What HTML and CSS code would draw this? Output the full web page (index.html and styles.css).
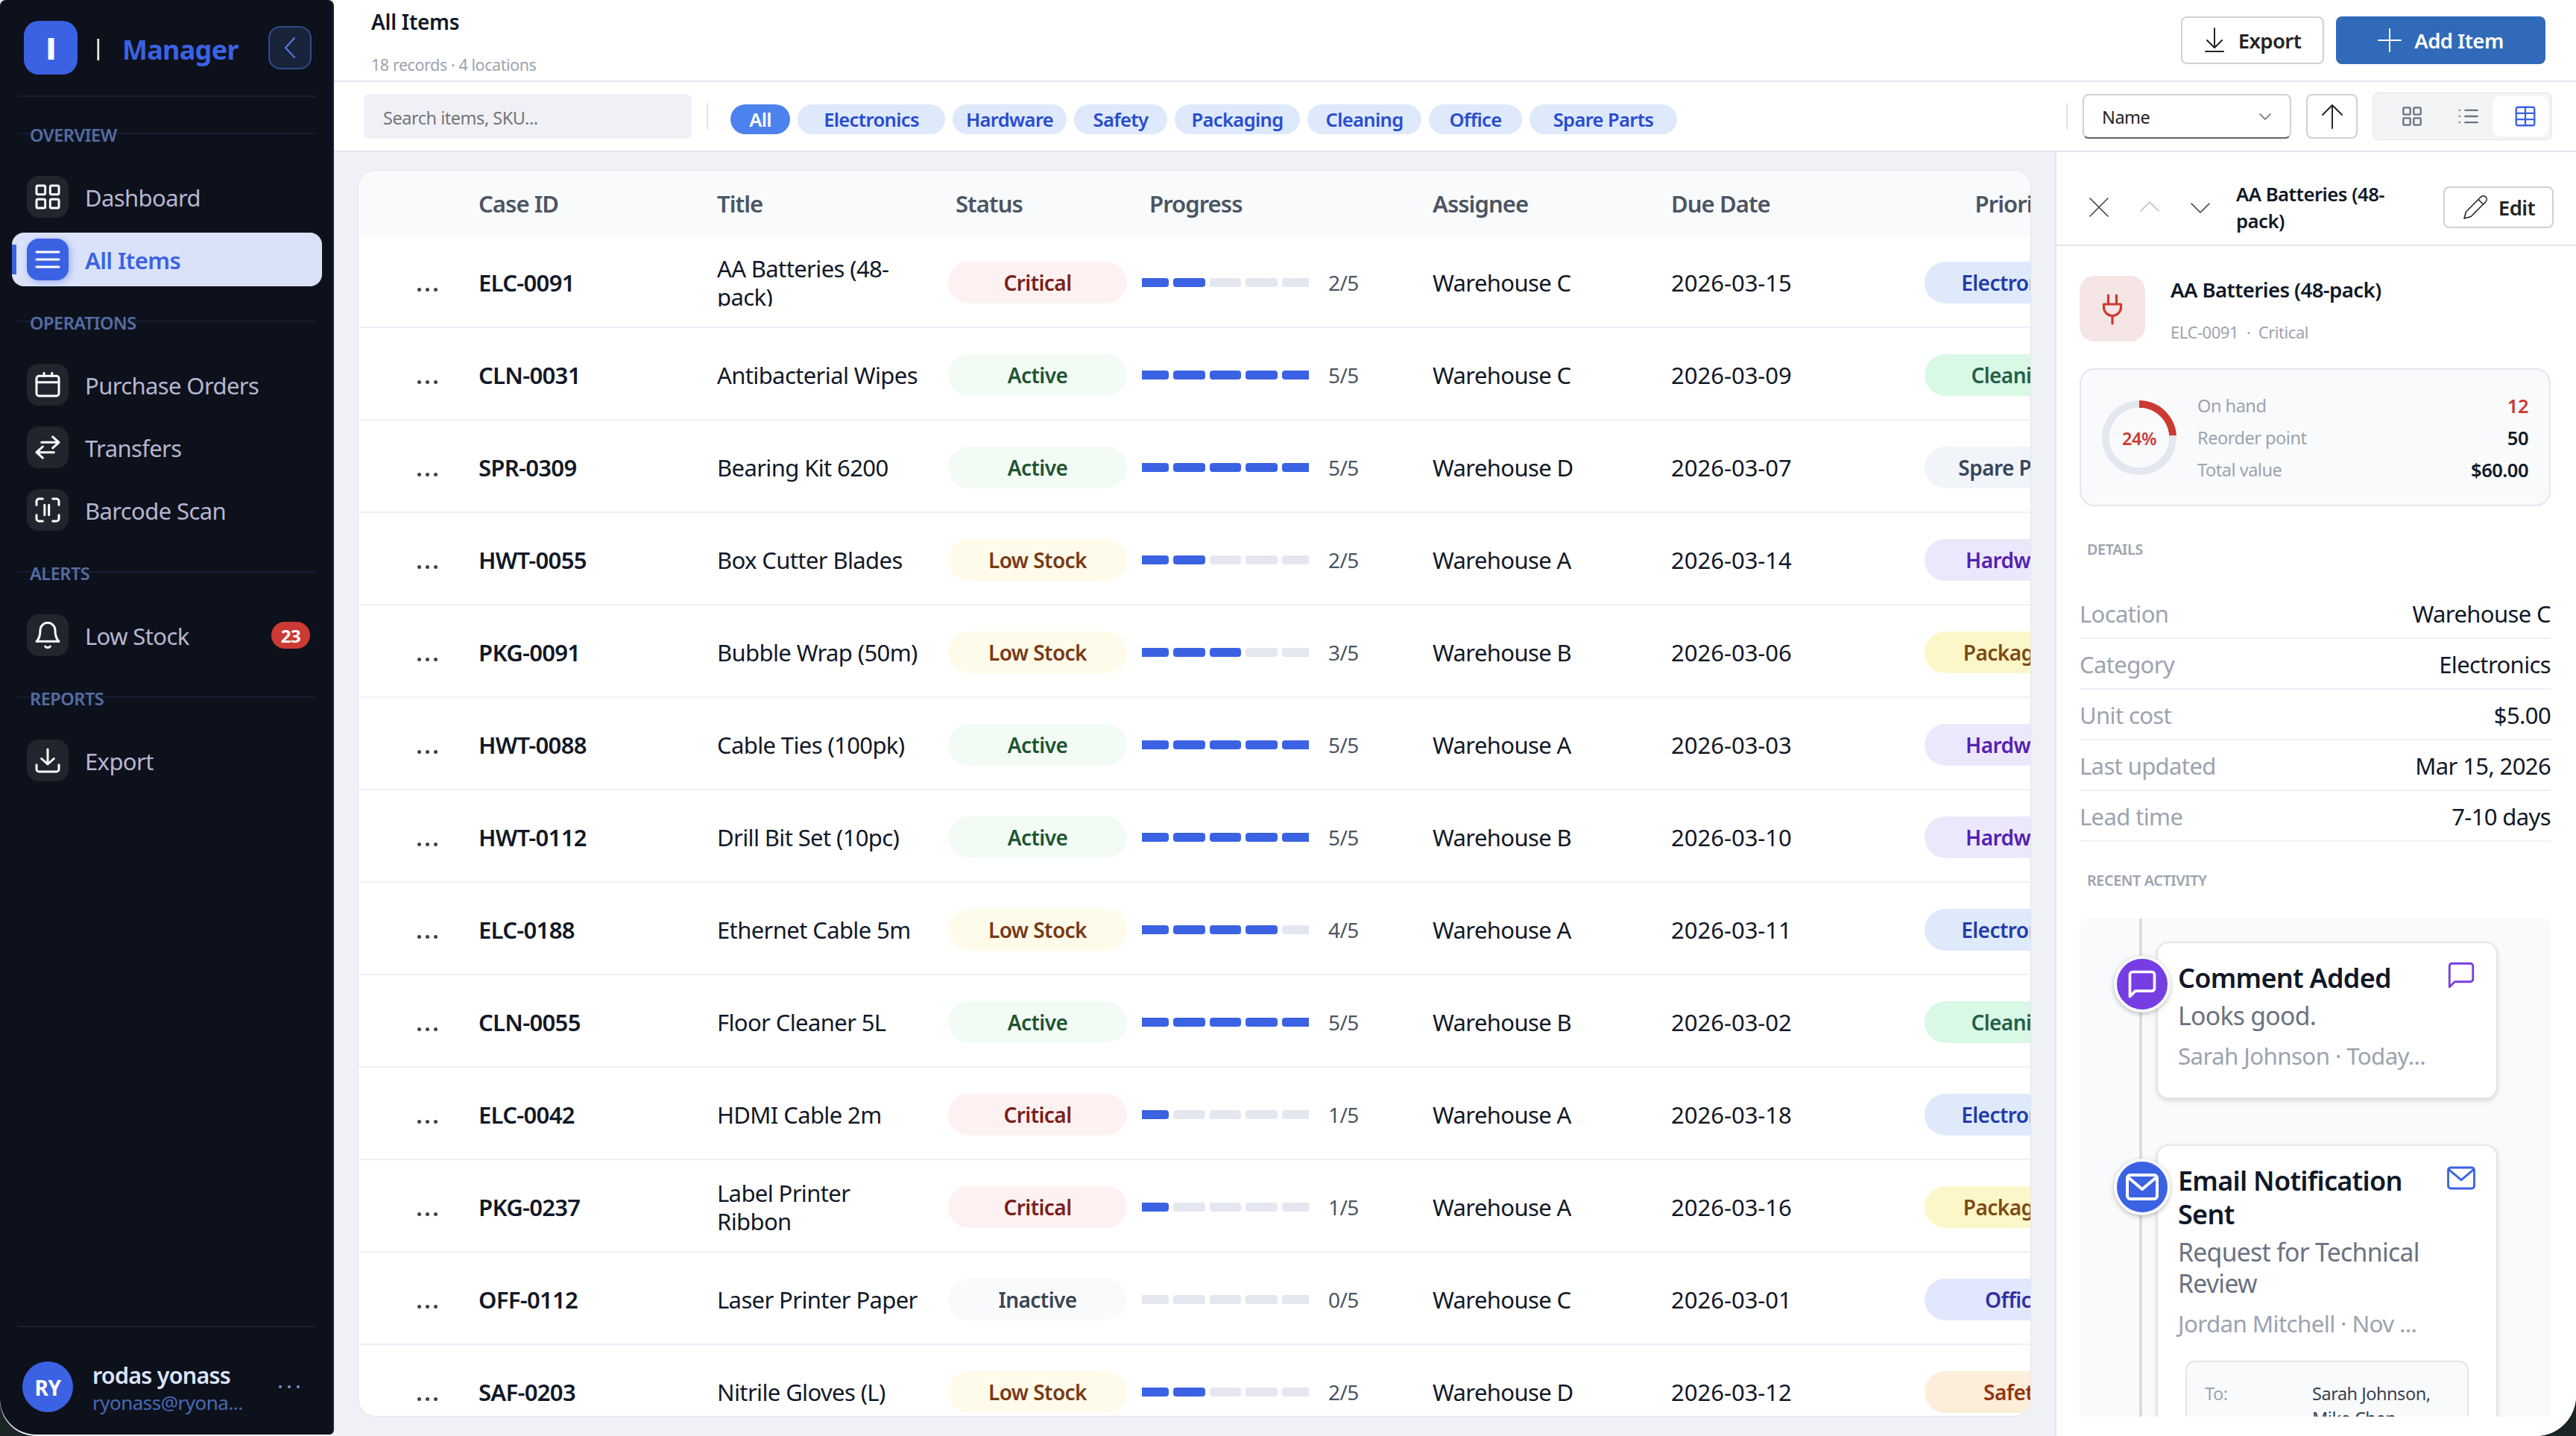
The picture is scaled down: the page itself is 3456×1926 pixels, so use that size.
FILE: index.html
```html
<!DOCTYPE html>
<html lang="en">
<head>
    <meta charset="UTF-8">
    <meta name="viewport" content="width=device-width, initial-scale=1.0">
    <title>All Items - Manager</title>
    <link rel="stylesheet" href="styles.css">
</head>
<body>
    <div class="app">
        <!-- Sidebar -->
        <aside class="sidebar">
            <div class="brand">
                <div class="brand-logo">I</div>
                <span class="brand-bar">|</span>
                <span class="brand-name">Manager</span>
                <button class="collapse-btn" aria-label="Collapse sidebar">
                    <svg width="18" height="34" viewBox="0 0 18 34"><path d="M15 4 3 17l12 13"/></svg>
                </button>
            </div>

            <nav class="nav">
                <div class="nav-section"><span>OVERVIEW</span></div>
                <a class="nav-item">
                    <span class="nav-icon"><svg viewBox="0 0 24 24"><rect x="3" y="3" width="7" height="7" rx="1"/><rect x="14" y="3" width="7" height="7" rx="1"/><rect x="3" y="14" width="7" height="7" rx="1"/><rect x="14" y="14" width="7" height="7" rx="1"/></svg></span>
                    <span class="nav-label">Dashboard</span>
                </a>
                <a class="nav-item active">
                    <span class="nav-icon"><svg viewBox="0 0 24 24"><path d="M3 6h18M3 12h18M3 18h18"/></svg></span>
                    <span class="nav-label">All Items</span>
                </a>
                <div class="nav-section"><span>OPERATIONS</span></div>
                <a class="nav-item">
                    <span class="nav-icon"><svg viewBox="0 0 24 24"><rect x="3" y="5" width="18" height="16" rx="2"/><path d="M3 10h18M9 2.5V5M15.500 2.500V5"/></svg></span>
                    <span class="nav-label">Purchase Orders</span>
                </a>
                <a class="nav-item">
                    <span class="nav-icon"><svg viewBox="0 0 24 24"><path d="M7 8h14M16 3.500l5 4.500-5 4.500M17 16H3M8 11.500 3 16l5 4.500"/></svg></span>
                    <span class="nav-label">Transfers</span>
                </a>
                <a class="nav-item">
                    <span class="nav-icon"><svg viewBox="0 0 24 24"><path d="M3 8V5a2 2 0 0 1 2-2h3M16 3h3a2 2 0 0 1 2 2v3M21 16v3a2 2 0 0 1-2 2h-3M8 21H5a2 2 0 0 1-2-2v-3M9.500 8v8M13 8v8"/></svg></span>
                    <span class="nav-label">Barcode Scan</span>
                </a>
                <div class="nav-section"><span>ALERTS</span></div>
                <a class="nav-item">
                    <span class="nav-icon"><svg viewBox="0 0 24 24"><path d="M6 8a6 6 0 0 1 12 0c0 4.500 1 7 3 9H3c2-2 3-4.500 3-9zM10 21c.8 1.200 3.200 1.200 4 0"/></svg></span>
                    <span class="nav-label">Low Stock</span>
                    <span class="nav-badge">23</span>
                </a>
                <div class="nav-section"><span>REPORTS</span></div>
                <a class="nav-item">
                    <span class="nav-icon"><svg viewBox="0 0 24 24"><path d="M12 3v12M7 10.500l5 4.500 5-4.500M3 15.500V19a2 2 0 0 0 2 2h14a2 2 0 0 0 2-2v-3.500"/></svg></span>
                    <span class="nav-label">Export</span>
                </a>
            </nav>

            <div class="user">
                <div class="avatar">RY</div>
                <div class="user-info">
                    <div class="user-name">rodas yonass</div>
                    <div class="user-email">ryonass@ryona...</div>
                </div>
                <svg class="user-more" width="30" height="6" viewBox="0 0 30 6"><circle cx="3" cy="3" r="2"/><circle cx="15" cy="3" r="2"/><circle cx="27" cy="3" r="2"/></svg>
            </div>
        </aside>

        <main class="main">
            <!-- Page header -->
            <header class="page-header">
                <div class="page-title">
                    <h1>All Items</h1>
                    <p>18 records · 4 locations</p>
                </div>
                <button class="btn btn-export">
                    <svg width="28" height="36" viewBox="0 0 28 36"><path d="M14 2v26M4 18l10 10 10-10M2 33h24"/></svg>
                    Export
                </button>
                <button class="btn btn-primary">
                    <svg width="32" height="32" viewBox="0 0 32 32"><path d="M16 1v30M1 16h30"/></svg>
                    Add Item
                </button>
            </header>

            <!-- Filters -->
            <div class="toolbar">
                <input class="search" type="text" placeholder="Search items, SKU...">
                <span class="divider"></span>
                <div class="chips">
                    <span class="chip chip-active">All</span>
                    <span class="chip chip-xl">Electronics</span>
                    <span class="chip chip-md">Hardware</span>
                    <span class="chip chip-sm">Safety</span>
                    <span class="chip chip-lg">Packaging</span>
                    <span class="chip chip-md">Cleaning</span>
                    <span class="chip chip-sm">Office</span>
                    <span class="chip chip-xl">Spare Parts</span>
                </div>
                <div class="toolbar-right">
                    <span class="divider"></span>
                    <div class="select">
                        Name
                        <svg width="18" height="12" viewBox="0 0 18 12"><path d="m2 2 7 7 7-7"/></svg>
                    </div>
                    <button class="sort-btn" aria-label="Sort ascending">
                        <svg width="32" height="36" viewBox="0 0 32 36"><path d="M16 34V3M3 16 16 3l13 13"/></svg>
                    </button>
                    <div class="view-toggle">
                        <span class="view"><svg viewBox="0 0 24 24"><rect x="2" y="2" width="8" height="8" rx="1"/><rect x="14" y="2" width="8" height="8" rx="1"/><rect x="2" y="14" width="8" height="8" rx="1"/><rect x="14" y="14" width="8" height="8" rx="1"/></svg></span>
                        <span class="view"><svg viewBox="0 0 24 24"><path d="M8 5h14M8 12h14M8 19h14M1.500 5h.1M1.500 12h.1M1.500 19h.1"/></svg></span>
                        <span class="view view-active"><svg viewBox="0 0 24 24"><rect x="1.500" y="1.500" width="21" height="21" rx="2"/><path d="M12 1.500v21M1.500 8.500h21M1.500 15.500h21"/></svg></span>
                    </div>
                </div>
            </div>

            <div class="content">
                <!-- Items table -->
                <section class="table-card">
                    <div class="row head">
                        <div></div>
                        <div>Case ID</div>
                        <div>Title</div>
                        <div>Status</div>
                        <div class="head-progress">Progress</div>
                        <div>Assignee</div>
                        <div>Due Date</div>
                        <div class="head-priority">Priority</div>
                    </div>
                    <div id="rows"></div>
                </section>

                <!-- Item details -->
                <aside class="panel">
                    <div class="panel-header">
                        <svg class="panel-close" width="28" height="28" viewBox="0 0 28 28"><path d="m2 2 24 24M26 2 2 26"/></svg>
                        <svg class="panel-prev" width="28" height="18" viewBox="0 0 28 18"><path d="M2 15 14 3l12 12"/></svg>
                        <svg class="panel-next" width="28" height="18" viewBox="0 0 28 18"><path d="m2 3 12 12L26 3"/></svg>
                        <h2>AA Batteries (48-<br>pack)</h2>
                        <button class="btn btn-edit">
                            <svg width="36" height="36" viewBox="0 0 36 36"><path d="M25.500 4a4.600 4.600 0 0 1 6.500 6.500L12 30.500 3 33l2.500-9zM22 7.500l6.500 6.500"/></svg>
                            Edit
                        </button>
                    </div>

                    <div class="panel-body">
                        <div class="item-head">
                            <div class="item-icon">
                                <svg width="36" height="44" viewBox="0 0 36 44"><path d="M12.500 4v12M23.500 4v12M6.500 16h23v4a11.500 11.500 0 0 1-23 0zM18 32v10"/></svg>
                            </div>
                            <div class="item-text">
                                <h3>AA Batteries (48-pack)</h3>
                                <p>ELC-0091 &nbsp;·&nbsp; Critical</p>
                            </div>
                        </div>

                        <div class="stock">
                            <div class="ring"><span>24%</span></div>
                            <div class="stock-list">
                                <div>On hand <b class="danger">12</b></div>
                                <div>Reorder point <b>50</b></div>
                                <div>Total value <b>$60.00</b></div>
                            </div>
                        </div>

                        <h4>DETAILS</h4>
                        <div class="details">
                            <div>Location <span>Warehouse C</span></div>
                            <div>Category <span>Electronics</span></div>
                            <div>Unit cost <span>$5.00</span></div>
                            <div>Last updated <span>Mar 15, 2026</span></div>
                            <div>Lead time <span>7-10 days</span></div>
                        </div>

                        <h4 class="activity-title">RECENT ACTIVITY</h4>
                        <div class="timeline">
                            <div class="event comment">
                                <span class="event-node"><svg width="44" height="44" viewBox="0 0 24 24"><path d="M21 15a2 2 0 0 1-2 2H7l-4 4V5a2 2 0 0 1 2-2h14a2 2 0 0 1 2 2z"/></svg></span>
                                <div class="event-top">
                                    <h5>Comment Added</h5>
                                    <svg width="42" height="42" viewBox="0 0 24 24"><path d="M21 15a2 2 0 0 1-2 2H7l-4 4V5a2 2 0 0 1 2-2h14a2 2 0 0 1 2 2z"/></svg>
                                </div>
                                <p class="event-text">Looks good.</p>
                                <p class="event-meta">Sarah Johnson · Today...</p>
                            </div>
                            <div class="event email">
                                <span class="event-node"><svg width="48" height="48" viewBox="0 0 24 24"><rect x="2" y="4" width="20" height="16" rx="2"/><path d="m2.500 5.500 9.500 8 9.500-8"/></svg></span>
                                <div class="event-top">
                                    <h5>Email Notification<br>Sent</h5>
                                    <svg width="42" height="42" viewBox="0 0 24 24"><rect x="2" y="4" width="20" height="16" rx="2"/><path d="m2.500 5.500 9.500 8 9.500-8"/></svg>
                                </div>
                                <p class="event-text">Request for Technical<br>Review</p>
                                <p class="event-meta">Jordan Mitchell · Nov ...</p>
                                <div class="mail-box">
                                    <span>To:</span>
                                    <div>Sarah Johnson,<br>Mike Chen,</div>
                                </div>
                            </div>
                        </div>
                    </div>
                </aside>
            </div>
        </main>
    </div>

    <script>
        // id, title, status, progress, assignee, due date, category
        const items = [
            ['ELC-0091', 'AA Batteries (48-<br>pack)', 'Critical', 2, 'Warehouse C', '2026-03-15', 'Electronics'],
            ['CLN-0031', 'Antibacterial Wipes', 'Active', 5, 'Warehouse C', '2026-03-09', 'Cleaning'],
            ['SPR-0309', 'Bearing Kit 6200', 'Active', 5, 'Warehouse D', '2026-03-07', 'Spare Parts'],
            ['HWT-0055', 'Box Cutter Blades', 'Low Stock', 2, 'Warehouse A', '2026-03-14', 'Hardware'],
            ['PKG-0091', 'Bubble Wrap (50m)', 'Low Stock', 3, 'Warehouse B', '2026-03-06', 'Packaging'],
            ['HWT-0088', 'Cable Ties (100pk)', 'Active', 5, 'Warehouse A', '2026-03-03', 'Hardware'],
            ['HWT-0112', 'Drill Bit Set (10pc)', 'Active', 5, 'Warehouse B', '2026-03-10', 'Hardware'],
            ['ELC-0188', 'Ethernet Cable 5m', 'Low Stock', 4, 'Warehouse A', '2026-03-11', 'Electronics'],
            ['CLN-0055', 'Floor Cleaner 5L', 'Active', 5, 'Warehouse B', '2026-03-02', 'Cleaning'],
            ['ELC-0042', 'HDMI Cable 2m', 'Critical', 1, 'Warehouse A', '2026-03-18', 'Electronics'],
            ['PKG-0237', 'Label Printer<br>Ribbon', 'Critical', 1, 'Warehouse A', '2026-03-16', 'Packaging'],
            ['OFF-0112', 'Laser Printer Paper', 'Inactive', 0, 'Warehouse C', '2026-03-01', 'Office'],
            ['SAF-0203', 'Nitrile Gloves (L)', 'Low Stock', 2, 'Warehouse D', '2026-03-12', 'Safety']
        ];

        const slug = text => text.toLowerCase().replace(' ', '-');

        document.getElementById('rows').innerHTML = items.map(item => {
            const [id, title, status, done, assignee, due, category] = item;
            let bars = '';
            for (let i = 0; i < 5; i++) {
                bars += `<i class="${i < done ? 'on' : ''}"></i>`;
            }
            return `<div class="row">
                <div class="row-menu"><i></i><i></i><i></i></div>
                <div class="case-id">${id}</div>
                <div class="title"><div>${title}</div></div>
                <div class="status-cell"><span class="pill ${slug(status)}">${status}</span></div>
                <div class="progress"><span class="bars">${bars}</span><span>${done}/5</span></div>
                <div>${assignee}</div>
                <div class="due">${due}</div>
                <div class="tag-cell"><span class="pill ${slug(category)}">${category}</span></div>
            </div>`;
        }).join('');
    </script>
</body>
</html>
```
FILE: styles.css
```css
* {
    margin: 0;
    padding: 0;
    box-sizing: border-box;
    letter-spacing: -0.02em;
}

body {
    font-family: 'Noto Sans', 'Open Sans', sans-serif;
    font-size: 31px;
    color: #111827;
    background-color: #1b2526;
    overflow: hidden;
}

svg {
    fill: none;
    stroke: currentColor;
    stroke-width: 2;
    stroke-linecap: round;
    stroke-linejoin: round;
    flex-shrink: 0;
}

button {
    font-family: inherit;
    background-color: white;
}

.app {
    display: flex;
    width: 3456px;
    height: 1926px;
    border-radius: 0 0 54px 48px;
    overflow: hidden;
    background-color: #f0f1f7;
}

/* Sidebar */
.sidebar {
    width: 448px;
    height: 1924px;
    display: flex;
    flex-direction: column;
    background-color: #0d111b;
    border-right: 2px solid #182038;
    border-radius: 8px 8px 6px 48px;
}

.brand {
    height: 130px;
    margin: 0 22px 0 24px;
    padding: 0 6px 0 8px;
    display: flex;
    align-items: center;
    border-bottom: 2px solid #181f36;
}

.brand-logo {
    width: 72px;
    height: 72px;
    border-radius: 20px;
    background-color: #3b62e3;
    color: white;
    font: 800 40px 'Open Sans', sans-serif;
    line-height: 74px;
    text-align: center;
}

.brand-bar {
    width: 55px;
    margin: 0 5px 2px 0;
    color: white;
    text-align: center;
    font-size: 28px;
    font-weight: 500;
}

.brand-name {
    flex: 1;
    margin-top: 4px;
    color: #3b62e3;
    font-size: 36px;
    font-weight: 700;
}

.collapse-btn {
    width: 58px;
    height: 58px;
    border: 2px solid #314b8c;
    border-radius: 16px;
    background-color: #19233a;
    color: #4d80ea;
    display: flex;
    align-items: center;
    justify-content: center;
}

.nav {
    flex: 1;
    padding-top: 8px;
    display: flex;
    flex-direction: column;
}

.nav-section {
    height: 84px;
    margin: 0 22px 0 24px;
    padding-left: 16px;
    display: flex;
    align-items: center;
    background: linear-gradient(#161d33, #161d33) 0 40px / 100% 2px no-repeat;
    color: #546da3;
    font-size: 23.5px;
    font-weight: 600;
}

.nav-section span {
    margin-top: 2px;
}

.nav-item {
    height: 72px;
    margin: 6px 14px 6px 16px;
    padding: 0 16px 0 20px;
    display: flex;
    align-items: center;
    border-radius: 16px;
    color: #b6b6d0;
}

.nav-icon {
    width: 56px;
    height: 56px;
    margin-right: 22px;
    display: flex;
    align-items: center;
    justify-content: center;
    border-radius: 16px;
    background-color: #20252e;
    color: white;
}

.nav-icon svg {
    width: 40px;
    height: 40px;
    stroke-width: 1.8;
}

.nav-label {
    margin-top: 2px;
}

.nav-item.active {
    background: linear-gradient(#3b62e3, #3b62e3) 0 center / 6px 40px no-repeat #dae2fa;
    color: #3b62e3;
    font-weight: 600;
}

.active .nav-icon {
    background-color: #3b62e3;
    box-shadow: 2px 2px 10px rgba(59, 98, 227, 0.4);
}

.nav-badge {
    margin-left: auto;
    width: 52px;
    height: 36px;
    border-radius: 18px;
    background-color: #cb3a33;
    color: white;
    font-size: 24px;
    font-weight: 700;
    line-height: 37px;
    text-align: center;
}

.user {
    height: 146px;
    margin: 0 22px 0 24px;
    padding: 16px 21px 0 6px;
    display: flex;
    align-items: center;
    border-top: 2px solid #181f36;
}

.avatar {
    width: 68px;
    height: 68px;
    border-radius: 50%;
    background-color: #3b62e3;
    color: white;
    font-size: 28px;
    font-weight: 700;
    line-height: 70px;
    text-align: center;
}

.user-info {
    flex: 1;
    margin: 3px 0 0 26px;
}

.user-name {
    color: #dbe4fd;
    font-size: 30.5px;
    font-weight: 600;
    line-height: 38px;
    letter-spacing: -0.025em;
}

.user-email {
    color: #4869b5;
    font-size: 26px;
    line-height: 36px;
}

.user-more {
    fill: #7b97d6;
    stroke: none;
}

/* Header */
.main {
    flex: 1;
    display: flex;
    flex-direction: column;
    min-width: 0;
}

.page-header {
    height: 110px;
    padding: 0 41px 0 50px;
    display: flex;
    align-items: center;
    gap: 16px;
    background-color: white;
    border-bottom: 2px solid #e3e7ee;
}

.page-title {
    flex: 1;
    height: 108px;
}

h1 {
    margin-top: 9px;
    font-size: 28px;
    font-weight: 600;
    line-height: 40px;
    letter-spacing: -0.01em;
}

.page-title p {
    margin-top: 22px;
    color: #9ca3af;
    font-size: 21.5px;
    line-height: 32px;
}

.btn {
    height: 64px;
    display: flex;
    align-items: center;
    justify-content: center;
    border: 2px solid #d1d1d1;
    border-radius: 8px;
    color: #242424;
    font-size: 27.5px;
    font-weight: 600;
}

.btn-export {
    width: 192px;
    gap: 18px;
}

.btn-primary {
    width: 281px;
    gap: 17px;
    border: none;
    background-color: #306ab8;
    color: white;
}

/* Toolbar */
.toolbar {
    height: 94px;
    padding: 0 32px 0 40px;
    display: flex;
    align-items: center;
    background-color: white;
    border-bottom: 2px solid #e2e5ee;
}

.search {
    width: 440px;
    height: 60px;
    padding: 4px 26px 0;
    border: none;
    border-radius: 8px;
    background-color: #f0f1f7;
    font-family: inherit;
    font-size: 23.5px;
}

.search::placeholder {
    color: #757575;
}

.divider {
    width: 2px;
    height: 36px;
    margin: 0 30px 0 20px;
    background-color: #e2e5ee;
}

.chips {
    display: flex;
    gap: 10px;
    margin-top: 8px;
}

.chip {
    width: 198px;
    height: 40px;
    border-radius: 20px;
    background-color: #dee9fb;
    color: #284cd0;
    font-size: 25.5px;
    font-weight: 600;
    line-height: 41px;
    letter-spacing: -0.025em;
    text-align: center;
}

.chip-sm { width: 125px; }
.chip-md { width: 153px; }
.chip-lg { width: 168px; }

.chip-active {
    width: 80px;
    background-color: #4c82ee;
    color: white;
}

.toolbar-right {
    margin-left: auto;
    display: flex;
    align-items: center;
}

.toolbar-right .divider {
    margin-right: 20px;
}

.select {
    width: 280px;
    height: 60px;
    margin-right: 20px;
    padding: 2px 24px 0;
    display: flex;
    align-items: center;
    justify-content: space-between;
    border: 2px solid #d1d1d1;
    border-bottom-color: #616161;
    border-radius: 8px;
    color: #242424;
    font-size: 23.5px;
}

.select svg {
    color: #616161;
    stroke-width: 1.5;
}

.sort-btn {
    width: 69px;
    height: 60px;
    margin-right: 20px;
    display: flex;
    align-items: center;
    justify-content: center;
    border: 2px solid #d1d1d1;
    border-radius: 8px;
    color: #242424;
}

.view-toggle {
    width: 241px;
    height: 64px;
    padding: 4px;
    display: flex;
    border: 1px solid #e2e5ea;
    border-radius: 8px;
    background-color: #f3f4f6;
}

.view {
    width: 76px;
    height: 54px;
    margin-left: 10px;
    display: flex;
    align-items: center;
    justify-content: center;
    border-radius: 10px;
    color: #6b7280;
}

.view + .view {
    margin-left: 0;
}

.view svg {
    width: 28px;
    height: 28px;
    overflow: visible;
}

.view-active {
    flex: 1;
    padding-left: 30px;
    justify-content: flex-start;
    background-color: white;
    color: #3b62e3;
}

.view.view-active {
    margin-left: -6px;
}

/* Table */
.content {
    flex: 1;
    display: flex;
    min-height: 0;
}

.table-card {
    width: 2245px;
    height: 1672px;
    margin: 24px 32px 0;
    border: 1px solid #e2e5ee;
    border-radius: 24px;
    background-color: white;
    overflow: hidden;
}

.row {
    width: 2377px;
    height: 124px;
    padding-top: 3px;
    display: grid;
    grid-template-columns: 145px 320px 320px 252px 388px 320px 320px 312px;
    align-items: center;
    border-bottom: 2px solid #eff0f6;
}

.row > div {
    padding-left: 16px;
}

.row.head {
    height: 87px;
    padding-top: 1px;
    border-bottom: none;
    background-color: #f9fafc;
    color: #4b5563;
    font-weight: 600;
}

.head > div {
    letter-spacing: -0.03em;
}

.head .head-progress {
    padding-left: 24px;
}

.head .head-priority {
    padding: 0;
    text-align: center;
}

.row .row-menu {
    padding: 20px 0 0 79px;
    display: flex;
    gap: 6px;
}

.row-menu i {
    width: 5px;
    height: 5px;
    border-radius: 50%;
    background-color: #424242;
}

.case-id {
    font-weight: 600;
    letter-spacing: -0.022em;
}

.due {
    letter-spacing: 0;
}

.title {
    height: 64px;
    display: flex;
    align-items: center;
    line-height: 38px;
    overflow: hidden;
}

.row .status-cell {
    padding-left: 6px;
}

.pill {
    display: block;
    width: 240px;
    height: 56px;
    border-radius: 28px;
    font-size: 28px;
    font-weight: 600;
    line-height: 57px;
    text-align: center;
}

.row .tag-cell {
    padding-left: 36px;
}

.critical { background-color: #fdf2f1; color: #7a201c; }
.active.pill { background-color: #f2fcf5; color: #205430; }
.low-stock { background-color: #fffbeb; color: #783a16; }
.inactive { background-color: #f9fafb; color: #3a4454; }
.electronics { background-color: #dee9fb; color: #233ca8; }
.cleaning { background-color: #d9f8e6; color: #245f46; }
.spare-parts { background-color: #f1f5f9; color: #374559; }
.hardware { background-color: #ece8fc; color: #5421b0; }
.packaging { background-color: #fcf7c8; color: #7d4b15; }
.office { background-color: #e1e7fd; color: #332fa0; }
.safety { background-color: #fceed8; color: #913413; }

.progress {
    display: flex;
    align-items: center;
    gap: 26px;
    color: #4b5563;
    font-size: 28px;
}

.bars {
    display: flex;
    gap: 6px;
    width: 224px;
    margin-left: -2px;
}

.bars i {
    flex: 1;
    height: 12px;
    border-radius: 4px;
    background-color: #e4e7ef;
}

.bars i:first-child {
    flex: 0 0 36px;
    border-radius: 0 4px 4px 0;
}

.bars i:last-child {
    flex: 0 0 36px;
    border-radius: 4px 0 0 4px;
}

.bars i.on {
    background-color: #3b62e3;
}

/* Detail panel */
.panel {
    width: 699px;
    height: 1722px;
    border-left: 2px solid #e2e5ee;
    background-color: white;
}

.panel-header {
    height: 126px;
    padding: 24px 30px 0 43px;
    display: flex;
    align-items: flex-start;
    border-bottom: 2px solid #e3e7ee;
    color: #424242;
}

.panel-header svg {
    stroke-width: 1.6;
}

.panel-close {
    margin-top: 36px;
}

.panel-prev,
.panel-next {
    margin: 40px 0 0 40px;
}

.panel-next {
    margin-top: 42px;
}

.panel-prev {
    color: #bdbdbd;
}

.panel-header h2 {
    flex: 1;
    margin: 15px 0 0 34px;
    color: #111827;
    font-size: 25.7px;
    font-weight: 600;
    line-height: 36px;
}

.btn-edit {
    width: 148px;
    height: 56px;
    margin-top: 22px;
    gap: 13px;
}

.panel-body {
    height: 1570px;
    padding: 40px 34px 0 31px;
    overflow: hidden;
}

.item-head {
    display: flex;
    height: 124px;
}

.item-icon {
    width: 88px;
    height: 88px;
    margin-right: 34px;
    display: flex;
    align-items: center;
    justify-content: center;
    border-radius: 20px;
    background-color: #f6e5e5;
    color: #cb3a33;
}

.item-icon svg {
    stroke-width: 3.2;
}

h3 {
    font-size: 27.5px;
    font-weight: 600;
    line-height: 38px;
}

.item-text p {
    margin-top: 20px;
    color: #9ca3af;
    font-size: 22px;
    line-height: 34px;
}

.stock {
    height: 185px;
    padding: 0 28px;
    display: flex;
    align-items: center;
    border: 2px solid #e4e7ef;
    border-radius: 20px;
    background-color: #f9fafc;
}

.ring {
    width: 100px;
    height: 100px;
    margin-right: 28px;
    padding-top: 2px;
    display: flex;
    align-items: center;
    justify-content: center;
    border-radius: 50%;
    background: radial-gradient(#f9fafc 40px, transparent 40.5px), conic-gradient(#cb3a33 24%, #e4e7ef 0);
    color: #cb3a33;
    font-size: 23.5px;
    font-weight: 600;
}

.stock-list {
    flex: 1;
    padding-top: 1px;
    color: #9ca3af;
    font-size: 23.5px;
    line-height: 43px;
}

.stock-list div,
.details div {
    display: flex;
    justify-content: space-between;
}

.stock-list b {
    color: #111827;
    font-size: 25.5px;
    font-weight: 600;
}

.stock-list .danger {
    color: #cb3a33;
}

h4 {
    height: 110px;
    padding: 43px 0 0 10px;
    color: #9ca3af;
    font-size: 19.8px;
    font-weight: 600;
    line-height: 30px;
}

.details div {
    height: 68px;
    padding-top: 2px;
    align-items: center;
    border-bottom: 2px solid #eff0f6;
    color: #9ca3af;
}

.details span {
    color: #111827;
}

.activity-title {
    height: 103px;
    padding-top: 37px;
}

.timeline {
    height: 900px;
    padding: 31px 71px 0 103px;
    border-radius: 8px;
    background: linear-gradient(#dbdce0, #dbdce0) 80px 0 / 4px 100% no-repeat #f9fafc;
}

.event {
    position: relative;
    height: 211px;
    margin-bottom: 61px;
    padding: 22px 26px 0 27px;
    border: 2px solid #e4e5e9;
    border-radius: 16px;
    background-color: white;
    box-shadow: 0 3px 6px rgba(0, 0, 0, 0.12);
}

.event.email {
    height: 560px;
}

.event-node {
    position: absolute;
    left: -59px;
    top: 17px;
    width: 76px;
    height: 76px;
    display: flex;
    align-items: center;
    justify-content: center;
    border: 4px solid #f9fafc;
    border-radius: 50%;
    box-shadow: 0 2px 6px rgba(0, 0, 0, 0.25);
    color: white;
}

.comment .event-node { background-color: #763de3; }
.email .event-node { background-color: #3b62e3; }

.event-top {
    display: flex;
    justify-content: space-between;
}

.event-top svg {
    stroke-width: 1.6;
}

.comment .event-top svg { color: #763de3; }
.email .event-top svg { color: #3b62e3; }

h5 {
    font-size: 36px;
    font-weight: 600;
    line-height: 45px;
    margin-top: 2px;
}

.event-text {
    margin-top: 7px;
    color: #6b7280;
    font-size: 33.7px;
    line-height: 42px;
}

.event-meta {
    margin-top: 10px;
    color: #9ca3af;
    font-size: 31.3px;
    line-height: 46px;
}

.mail-box {
    height: 200px;
    margin: 27px 11px 0 10px;
    padding: 26px 24px;
    display: flex;
    border: 2px solid #e4e5e9;
    border-radius: 12px;
    background-color: #f9fafc;
    color: #9ca3af;
    font-size: 23.5px;
    line-height: 33px;
}

.mail-box span {
    width: 144px;
}

.mail-box div {
    color: #374151;
}
```
